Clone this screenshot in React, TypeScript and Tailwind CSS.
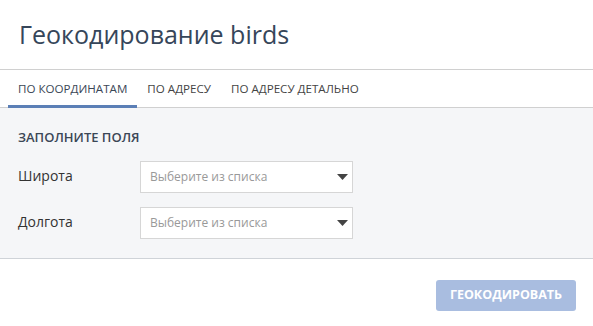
import React from "react";

function Arrow() {
  return (
    <svg width="11" height="6" viewBox="0 0 11 6" className="shrink-0">
      <path d="M0 0 H11 L5.5 6 Z" fill="#444" />
    </svg>
  );
}

function Field({ label }: { label: string }) {
  return (
    <div className="flex items-center">
      <div className="w-[122px] pb-[3px] text-[14px] text-[#333]">{label}</div>
      <div className="flex h-[32px] w-[213px] items-center justify-between border border-[#d6d6d6] bg-white pl-[9px] pr-[4px]">
        <span className="text-[12px] text-[#999]">Выберите из списка</span>
        <Arrow />
      </div>
    </div>
  );
}

export default function App() {
  return (
    <div
      className="h-[326px] w-[593px] overflow-hidden bg-white"
      style={{ fontFamily: '"Open Sans", sans-serif' }}
    >
      <div className="flex h-[70px] items-center border-b border-[#d0d0d0] pl-[19px]">
        <h1 className="text-[25px] leading-none text-[#36465a]">Геокодирование birds</h1>
      </div>
      <div className="flex h-[38px] border-b border-[#d0d0d0] px-[8px] text-[11.6px] text-[#444]">
        <div className="-mb-px flex items-center border-b-[3px] border-[#5b7fb6] px-[10px] pt-[3px] text-[#3b4756]">
          ПО КООРДИНАТАМ
        </div>
        <div className="flex items-center px-[10px]">ПО АДРЕСУ</div>
        <div className="flex items-center px-[10px]">ПО АДРЕСУ ДЕТАЛЬНО</div>
      </div>
      <div className="flex flex-col border-b border-[#cfd3d8] bg-[#f5f6f8] px-[18px] pb-[19px] pt-[20px]">
        <div className="text-[13px] font-semibold leading-[18px] text-[#3b4756]">ЗАПОЛНИТЕ ПОЛЯ</div>
        <div className="mt-[15px] flex flex-col gap-[14px]">
          <Field label="Широта" />
          <Field label="Долгота" />
        </div>
      </div>
      <div className="flex justify-end pr-[17px] pt-[21px]">
        <button className="flex h-[31px] w-[140px] items-center justify-center rounded-[3px] bg-[#a9bde0] text-[12.5px] font-bold text-white">
          ГЕОКОДИРОВАТЬ
        </button>
      </div>
    </div>
  );
}
